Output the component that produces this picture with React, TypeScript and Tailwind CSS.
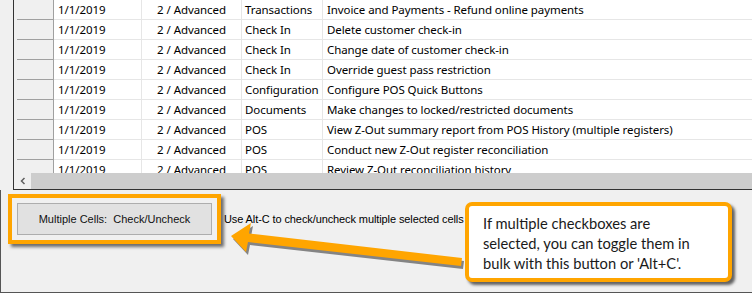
import React from "react"

const rows = [
  ["Transactions", "Invoice and Payments - Refund online payments"],
  ["Check In", "Delete customer check-in"],
  ["Check In", "Change date of customer check-in"],
  ["Check In", "Override guest pass restriction"],
  ["Configuration", "Configure POS Quick Buttons"],
  ["Documents", "Make changes to locked/restricted documents"],
  ["POS", "View Z-Out summary report from POS History (multiple registers)"],
  ["POS", "Conduct new Z-Out register reconciliation"],
  ["POS", "Review Z-Out reconciliation history"],
]

function GridRow({ category, description }: { category: string; description: string }) {
  return (
    <div className="flex h-[20px] shrink-0 text-[11.5px] leading-[19px] tracking-[-0.08px] text-black">
      {/* row header */}
      <div className="w-[40px] shrink-0 border-r border-[#a0a0a0] bg-[#f0f0f0] pl-[3px]">
        <div className="h-full border-b border-[#a0a0a0]" />
      </div>
      <div className="w-[88px] shrink-0 border-r border-b border-[#e6e6e6] pl-[4px]">1/1/2019</div>
      <div className="w-[100px] shrink-0 border-r border-b border-[#e6e6e6] text-center">2 / Advanced</div>
      <div className="w-[81px] shrink-0 overflow-hidden border-r border-b border-[#e6e6e6] pl-[3px] whitespace-nowrap">{category}</div>
      <div className="flex-1 border-b border-[#e6e6e6] pl-[4px] whitespace-nowrap">{description}</div>
    </div>
  )
}

export default function App() {
  return (
    <div className="relative w-[752px] h-[293px] overflow-hidden bg-[#f0f0f0] font-['Noto_Sans',sans-serif]">
      {/* grid */}
      <div className="flex h-[190px]">
        <div className="w-[13px] shrink-0" />
        <div className="flex flex-1 flex-col border-l border-b border-[#333]">
          <div className="h-[173px] overflow-hidden bg-white flex flex-col">
            {rows.map(([c, d], i) => (
              <GridRow key={i} category={c} description={d} />
            ))}
          </div>
          <div className="flex h-[16px]">
            <div className="w-[17px] flex items-center justify-center bg-[#f0f0f0]">
              <svg width="8" height="8" viewBox="0 0 8 8">
                <path d="M5.5 1 L2.5 4 L5.5 7" fill="none" stroke="#606060" strokeWidth="1.5" />
              </svg>
            </div>
            <div className="flex-1 bg-[#cdcdcd]" />
          </div>
        </div>
      </div>

      {/* bottom panel */}
      <div className="h-[103px] border-l border-b border-[#555]">
        <div className="flex items-center pt-[4px]">
          <div className="ml-[7px] border-4 border-[#ffa500] p-[5px] shadow-[3px_3px_3px_rgba(0,0,0,0.55)]">
            <button className="flex h-[32px] w-[195px] items-center justify-center border border-[#adadad] bg-[#e1e1e1] font-['Liberation_Sans',sans-serif] text-[11px] text-[#111]">
              Multiple Cells:&nbsp; Check/Uncheck
            </button>
          </div>
          <span className="ml-[3px] font-['Liberation_Sans',sans-serif] text-[11px] tracking-[-0.1px] text-black">
            Use Alt-C to check/uncheck multiple selected cells
          </span>
        </div>
      </div>

      {/* annotation arrow */}
      <svg className="absolute left-0 top-0" width="752" height="293" viewBox="0 0 752 293">
        <g transform="translate(2 3)" fill="rgba(0,0,0,0.45)">
          <path d="M231 236 L251 223 L249 233.5 L462 258 L461 266 L248 242 L246 252 Z" />
        </g>
        <path d="M231 236 L251 223 L249 233.5 L462 258 L461 266 L248 242 L246 252 Z" fill="#ffa500" />
      </svg>

      {/* callout */}
      <div className="absolute left-[465px] top-[202px] h-[80px] w-[267px] rounded-[7px] border-4 border-[#ffa500] bg-white pl-[14px] pt-[7px] font-['Lato',sans-serif] text-[14.7px] leading-[20px] text-[#1a1a1a] shadow-[3px_3px_3px_rgba(0,0,0,0.6)]">
        <div>If multiple checkboxes are</div>
        <div>selected, you can toggle them in</div>
        <div>bulk with this button or 'Alt+C'.</div>
      </div>
    </div>
  )
}
